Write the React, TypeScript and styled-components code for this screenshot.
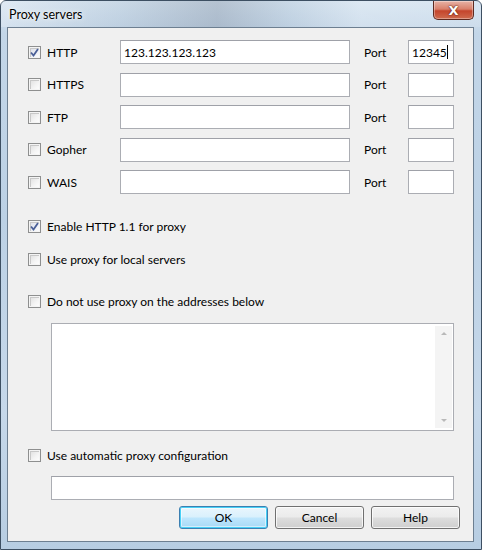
import styled, { createGlobalStyle, css } from "styled-components";

const GlobalStyle = createGlobalStyle`
  html, body {
    margin: 0;
    padding: 0;
    background: #ffffff;
  }
  * {
    box-sizing: border-box;
  }
`;

const uiFont = `"Lato", "Noto Sans", "Liberation Sans", sans-serif`;

const Window = styled.div`
  width: 482px;
  height: 550px;
  display: flex;
  flex-direction: column;
  padding: 0 7px 7px 6px;
  border: 1px solid #3d4f62;
  border-radius: 6px 6px 0 0;
  background: linear-gradient(
    180deg,
    #d5e3f0 0%,
    #c3d6e8 6%,
    #bcd1e5 40%,
    #c6d8ea 75%,
    #b7cde2 100%
  );
  font-family: ${uiFont};
  font-size: 12px;
  color: #000;
`;

const TitleBar = styled.div`
  height: 26px;
  display: flex;
  align-items: center;
  justify-content: space-between;
  padding-left: 2px;
  margin: 0 -7px 0 -6px;
  padding-right: 7px;
  background: linear-gradient(
    90deg,
    rgba(255, 255, 255, 0.25) 0%,
    rgba(120, 140, 160, 0.12) 25%,
    rgba(70, 80, 100, 0.22) 45%,
    rgba(120, 140, 160, 0.12) 60%,
    rgba(255, 255, 255, 0.2) 75%,
    rgba(255, 255, 255, 0.1) 100%
  );
`;

const Title = styled.span`
  font-size: 12.5px;
  color: #000;
  padding-left: 6px;
  text-shadow: 0 0 6px rgba(255, 255, 255, 0.9), 0 0 2px #fff;
  margin-top: 1px;
`;

const CloseButton = styled.div`
  width: 41px;
  height: 19px;
  margin-top: -7px;
  border: 1px solid #5e2a20;
  border-top: none;
  border-radius: 0 0 5px 5px;
  background: linear-gradient(180deg, #e7b3a6 0%, #d9806b 45%, #c4452c 55%, #cf6b4e 100%);
  box-shadow: inset 0 0 0 1px rgba(255, 255, 255, 0.35);
  display: flex;
  align-items: center;
  justify-content: center;
  color: #fff;
  font-family: "DejaVu Sans", sans-serif;
  font-weight: bold;
  font-size: 13px;
  text-shadow: 0 0 2px #5a1a10, 0 0 1px #5a1a10;
  padding-top: 1px;
`;

const Client = styled.div`
  flex: 1;
  background: #f0f0f0;
  border: 1px solid #6d7f91;
  display: flex;
  flex-direction: column;
  padding: 12px 19px 0 20px;
`;

const ProxyGrid = styled.div`
  display: grid;
  grid-template-columns: 92px 230px 58px 46px;
  grid-auto-rows: 24px;
  row-gap: 8.5px;
  align-items: center;
`;

const CheckLabel = styled.label`
  display: flex;
  align-items: center;
  gap: 6px;
  height: 20px;
  white-space: nowrap;
`;

const Box = styled.span<{ $checked?: boolean }>`
  width: 13px;
  height: 13px;
  flex: none;
  border: 1px solid #8e8f8f;
  background: linear-gradient(135deg, #dcdcdc 0%, #f4f4f4 60%, #ffffff 100%);
  box-shadow: inset 0 0 0 1px #f4f4f4, inset 1px 1px 0 1px #c8c8c8;
  display: flex;
  align-items: center;
  justify-content: center;
  ${(p) =>
    p.$checked &&
    css`
      background: linear-gradient(135deg, #d8dbe6 0%, #eef0f5 60%, #ffffff 100%);
    `}
`;

const TextBox = styled.div`
  height: 24px;
  width: 100%;
  background: #fff;
  border: 1px solid #abadb3;
  border-top-color: #9fa1a8;
  display: flex;
  align-items: center;
  padding-left: 3px;
  font-size: 12px;
`;

const Caret = styled.span`
  display: inline-block;
  width: 1px;
  height: 14px;
  background: #000;
`;

const PortLabel = styled.span`
  padding-left: 14px;
`;

const Option = styled.div<{ $top: number }>`
  margin-top: ${(p) => p.$top}px;
`;

const ListBox = styled.div`
  margin: 12px 0 0 23px;
  height: 108px;
  background: #fff;
  border: 1px solid #abadb3;
  display: flex;
  justify-content: flex-end;
`;

const ScrollBar = styled.div`
  width: 17px;
  margin: 2px 1px 2px 0;
  background: #f4f4f4;
  display: flex;
  flex-direction: column;
  justify-content: space-between;
  align-items: center;
  padding: 6px 0 6px;
`;

const Arrow = styled.span<{ $down?: boolean }>`
  width: 0;
  height: 0;
  border-left: 3.5px solid transparent;
  border-right: 3.5px solid transparent;
  ${(p) =>
    p.$down
      ? css`
          border-top: 3px solid #b9b9b9;
        `
      : css`
          border-bottom: 3px solid #b9b9b9;
        `}
`;

const AutoInput = styled.div`
  margin: 11px 0 0 23px;
`;

const ButtonRow = styled.div`
  display: flex;
  justify-content: flex-end;
  gap: 7px;
  margin: 6px -6px 0 0;
`;

const Button = styled.div<{ $default?: boolean }>`
  width: 89px;
  height: 23px;
  border: 1px solid #707070;
  border-radius: 3px;
  background: linear-gradient(180deg, #f2f2f2 0%, #ebebeb 48%, #dddddd 52%, #cfcfcf 100%);
  box-shadow: inset 0 0 0 1px rgba(255, 255, 255, 0.75);
  display: flex;
  align-items: center;
  justify-content: center;
  ${(p) =>
    p.$default &&
    css`
      border-color: #3c7fb1;
      background: linear-gradient(180deg, #eaf6fd 0%, #d9f0fc 48%, #bee6fd 52%, #a7d9f5 100%);
      box-shadow: inset 0 0 0 1px #48d0f6, inset 0 0 0 2px rgba(255, 255, 255, 0.5);
    `}
`;

function CheckBox({ checked, label }: { checked?: boolean; label: string }) {
  return (
    <CheckLabel>
      <Box $checked={checked}>
        {checked && (
          <svg width="9" height="9" viewBox="0 0 9 9">
            <path d="M1 4.5 L3.5 7.5 L8 1" fill="none" stroke="#4a5f97" strokeWidth="1.8" />
          </svg>
        )}
      </Box>
      {label}
    </CheckLabel>
  );
}

const protocols = [
  { name: "HTTP", checked: true, host: "123.123.123.123", port: "12345" },
  { name: "HTTPS" },
  { name: "FTP" },
  { name: "Gopher" },
  { name: "WAIS" },
];

export default function App() {
  return (
    <>
      <GlobalStyle />
      <Window>
        <TitleBar>
          <Title>Proxy servers</Title>
          <CloseButton>X</CloseButton>
        </TitleBar>
        <Client>
          <ProxyGrid>
            {protocols.map((p) => [
              <CheckBox key={p.name + "c"} checked={p.checked} label={p.name} />,
              <TextBox key={p.name + "h"}>{p.host}</TextBox>,
              <PortLabel key={p.name + "l"}>Port</PortLabel>,
              <TextBox key={p.name + "p"}>
                {p.port}
                {p.port && <Caret />}
              </TextBox>,
            ])}
          </ProxyGrid>
          <Option $top={22}>
            <CheckBox checked label="Enable HTTP 1.1 for proxy" />
          </Option>
          <Option $top={13}>
            <CheckBox label="Use proxy for local servers" />
          </Option>
          <Option $top={22}>
            <CheckBox label="Do not use proxy on the addresses below" />
          </Option>
          <ListBox>
            <ScrollBar>
              <Arrow />
              <Arrow $down />
            </ScrollBar>
          </ListBox>
          <Option $top={14}>
            <CheckBox label="Use automatic proxy configuration" />
          </Option>
          <AutoInput>
            <TextBox />
          </AutoInput>
          <ButtonRow>
            <Button $default>OK</Button>
            <Button>Cancel</Button>
            <Button>Help</Button>
          </ButtonRow>
        </Client>
      </Window>
    </>
  );
}
